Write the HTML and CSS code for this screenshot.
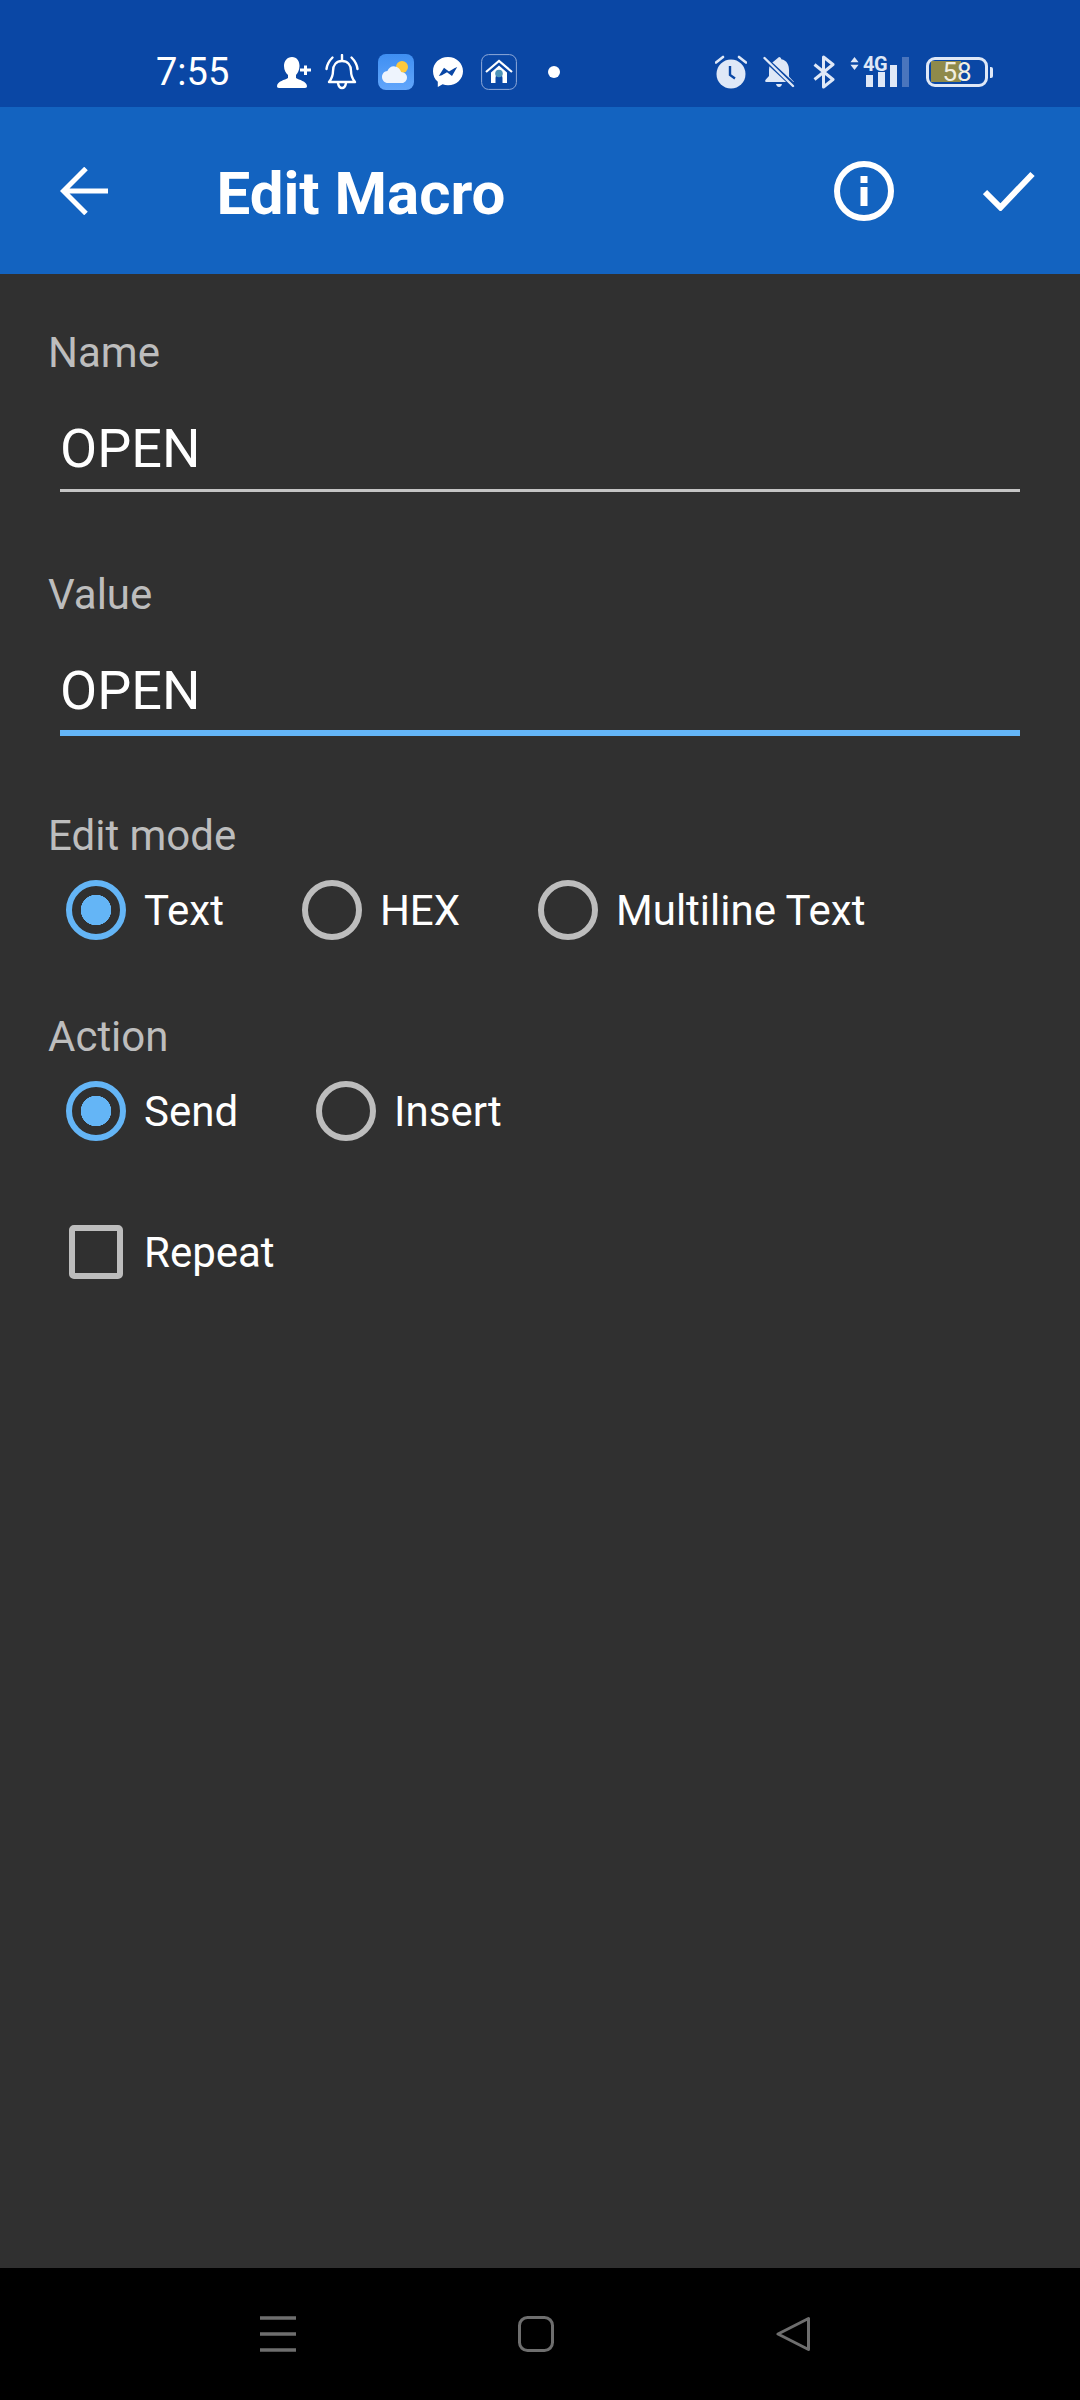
FILE: index.html
```html
<!DOCTYPE html>
<html lang="en">
<head>
<meta charset="utf-8">
<title>Edit Macro</title>
<link rel="stylesheet" href="styles.css">
</head>
<body>
<div class="screen">
  <header class="statusbar">
    <div class="status-left">
      <span class="time">7:55</span>
      <svg class="ic ic-person" viewBox="0 0 34 32"><path fill="#fff" d="M15 0c5 0 7.500 4 7.500 9 0 4-2 7.500-3.500 9v3c3 2 10.500 3 11 8 0 1-.5 2-2 2H2C.5 31 0 30 0 29c.5-5 8-6 11-8v-3C9 16.500 7 13 7 9c0-5 3-9 8-9z"/><path fill="#fff" d="M27 8.500h3v3h4v3h-4V18h-3v-3.500h-4v-3h4z"/></svg>
      <svg class="ic ic-bell" viewBox="0 0 34 36"><g fill="none" stroke="#fff" stroke-width="2.400" stroke-linecap="round" stroke-linejoin="round"><path d="M8 17c0-6 3.500-10 9-10s9 4 9 10c0 5 1.500 8 4 11H4c2.500-3 4-6 4-11z"/><path d="M17 1v5M13 29c.5 3 2 5 4 5s3.500-2 4-5"/><path d="M1.500 15C2 10.500 4 7 7.500 3.500M32.500 15C32 10.500 30 7 26.500 3.500"/></g></svg>
      <svg class="ic ic-weather" viewBox="0 0 36 36"><defs><linearGradient id="sky" x1="0" y1="0" x2="0" y2="1"><stop offset="0" stop-color="#3f8ff2"/><stop offset="1" stop-color="#62a6fb"/></linearGradient></defs><rect width="36" height="36" rx="8" fill="url(#sky)"/><circle cx="24" cy="13" r="6" fill="#ffc93c"/><path fill="#eef4fd" d="M10 29c-3.500 0-6-2.700-6-6 0-3.200 2.400-5.700 5.400-5.900 1.300-3.300 4-5 7.200-4.700 3.300.3 5.700 2.500 6.500 5.500 3.200.1 5.900 2.300 5.900 5.500 0 3-2.300 5.600-5.500 5.600z"/></svg>
      <svg class="ic ic-msgr" viewBox="0 0 32 32"><path fill="#fff" d="M16 1C7.500 1 1 7.200 1 15.200c0 4.300 1.800 8 4.800 10.600V31l4.800-2.700c1.700.6 3.500.9 5.400.9 8.500 0 15-6.200 15-14S24.500 1 16 1z"/><path fill="#0a47a5" d="M6.800 20 12 11.800l5 3.800 5.400-3.400 2.800-1.200L20 20l-5-3.800-5.200 3z"/></svg>
      <svg class="ic ic-home" viewBox="0 0 36 36"><rect x=".6" y=".6" width="34.800" height="34.800" rx="7" fill="none" stroke="#8fa9d8" stroke-width="1"/><path fill="none" stroke="#fff" stroke-width="2.200" d="M5 18 18 7l13 11"/><path fill="#fff" d="M10 18.500 18 11.500l8 7V29h-4.500v-5a3.500 3.500 0 0 0-7 0v5H10z"/><circle cx="18" cy="19.500" r="3.800" fill="#4d93b8"/></svg>
      <span class="dot"></span>
    </div>
    <div class="status-right">
      <svg class="ic ic-alarm" viewBox="0 0 32 34"><circle cx="16" cy="19" r="14.500" fill="#dfe8f7"/><path fill="none" stroke="#dfe8f7" stroke-width="2.600" stroke-linecap="round" d="M1 7.500 8 2M31 7.500 24 2"/><path fill="none" stroke="#0a47a5" stroke-width="2.400" d="M15 11v9l5 3.500"/></svg>
      <svg class="ic ic-belloff" viewBox="0 0 32 34"><path fill="#dfe8f7" d="M16 2c1.400 0 2.300 1 2.300 2.300C24 5.500 26 10 26 15v6.500l5 5.500H3c-.8 0-1.200-1.500-.4-2.300L6 21v-6c0-2 .3-3.800 1-5.400z"/><path fill="#dfe8f7" d="M13 29h6c-.5 2-1.500 3-3 3s-2.500-1-3-3z"/><path stroke="#0a47a5" stroke-width="5" d="M1 3 31 31"/><path stroke="#dfe8f7" stroke-width="2.400" stroke-linecap="round" d="M1.500 3 30 31"/></svg>
      <svg class="ic ic-bt" viewBox="0 0 22 34"><path fill="none" stroke="#dfe8f7" stroke-width="3" stroke-linejoin="round" d="M1.500 9.500 20 24.500 10.500 32V2L20 9.500 1.500 24.500"/></svg>
      <div class="signal">
        <svg class="ic-arrows" viewBox="0 0 10 16"><path fill="#dfe8f7" d="M5 0 10 6.500H0zM5 16 0 9.500h10z"/></svg>
        <span class="net">4G</span>
        <div class="bars">
          <i class="bar b1"></i><i class="bar b2"></i><i class="bar b3"></i><i class="bar b4"></i>
        </div>
      </div>
      <div class="battery-wrap">
        <div class="battery">58</div>
        <i class="nub"></i>
      </div>
    </div>
  </header>

  <div class="toolbar">
    <svg class="tb-back" viewBox="0 0 48 48"><path fill="none" stroke="#fff" stroke-width="5" d="M48 24H3M26 1.500 3.500 24 26 46.500"/></svg>
    <h1 class="title">Edit Macro</h1>
    <svg class="tb-info" viewBox="0 0 60 60"><circle cx="30" cy="30" r="27" fill="none" stroke="#fff" stroke-width="6"/><path fill="#fff" d="M26.500 15h7v7h-7zM26.500 26h7v19h-7z"/></svg>
    <svg class="tb-check" viewBox="0 0 52 40"><path fill="none" stroke="#fff" stroke-width="6" d="M2 21l15.500 15.500L49.500 3"/></svg>
  </div>

  <main class="form">
    <div class="label">Name</div>
    <div class="field">OPEN</div>

    <div class="label label-value">Value</div>
    <div class="field field-focus">OPEN</div>

    <div class="label label-mode">Edit mode</div>
    <div class="radios radios-mode">
      <div class="opt"><span class="radio on"></span><span class="opt-text">Text</span></div>
      <div class="opt"><span class="radio"></span><span class="opt-text">HEX</span></div>
      <div class="opt"><span class="radio"></span><span class="opt-text">Multiline Text</span></div>
    </div>

    <div class="label label-action">Action</div>
    <div class="radios radios-action">
      <div class="opt"><span class="radio on"></span><span class="opt-text">Send</span></div>
      <div class="opt"><span class="radio"></span><span class="opt-text">Insert</span></div>
    </div>

    <div class="check-row">
      <span class="checkbox"></span><span class="opt-text">Repeat</span>
    </div>
  </main>

  <nav class="navbar">
    <svg class="nav-ic" viewBox="0 0 36 36"><path stroke="#6e6e6e" stroke-width="3.600" d="M0 2h36M0 18h36M0 34h36"/></svg>
    <svg class="nav-ic" viewBox="0 0 36 36"><rect x="1.500" y="1.500" width="33" height="33" rx="8" fill="none" stroke="#6e6e6e" stroke-width="3"/></svg>
    <svg class="nav-ic" viewBox="0 0 36 36"><path fill="none" stroke="#6e6e6e" stroke-width="3" stroke-linejoin="round" d="M32.500 2.500v31L2 18z"/></svg>
  </nav>
</div>
</body>
</html>
```
FILE: styles.css
```css
* { box-sizing: border-box; }
html, body { margin: 0; padding: 0; }
body { background: #303030; font-family: Roboto, "Liberation Sans", sans-serif; }
.screen { width: 1080px; height: 2400px; display: flex; flex-direction: column; overflow: hidden; }

.statusbar { height: 107px; flex: none; background: #0a47a5; display: flex; justify-content: space-between; padding: 0 87px 0 156px; align-items: flex-start; }
.status-left, .status-right { display: flex; align-items: center; height: 90px; padding-top: 54px; }
.time { color: #fff; font-size: 38px; line-height: 36px; width: 74px; margin-right: 47px; }
.ic { display: block; flex: none; }
.ic-person { width: 34px; height: 32px; margin-right: 14px; margin-top: 2px; }
.ic-bell { width: 34px; height: 36px; margin-right: 19px; }
.ic-weather { width: 36px; height: 36px; margin-right: 18px; }
.ic-msgr { width: 32px; height: 32px; margin-right: 17px; }
.ic-home { width: 36px; height: 36px; margin-right: 31px; }
.dot { width: 12px; height: 12px; border-radius: 50%; background: #fff; }

.ic-alarm { width: 32px; height: 34px; margin-right: 16px; }
.ic-belloff { width: 32px; height: 34px; margin-right: 18px; }
.ic-bt { width: 22px; height: 34px; margin-right: 14px; }
.signal { position: relative; width: 62px; height: 34px; margin-right: 15px; }
.ic-arrows { position: absolute; left: 1px; top: 2px; width: 9px; height: 13px; }
.net { position: absolute; left: 14px; top: -1px; color: #dfe8f7; font-size: 20px; line-height: 20px; font-weight: 700; letter-spacing: -.5px; }
.bars { position: absolute; left: 17px; right: 2px; bottom: 2px; height: 30px; display: flex; gap: 5px; align-items: flex-end; }
.bar { display: block; width: 7px; background: #dfe8f7; }
.b1 { height: 12px; }
.b2 { height: 15px; }
.b3 { height: 22px; }
.b4 { height: 30px; background: #4a75bd; }
.battery-wrap { display: flex; align-items: center; }
.battery { width: 62px; height: 30px; border: 3px solid #dfe8f7; border-radius: 9px; color: #f2efe0; font-size: 26px; line-height: 24px; text-align: center; background: linear-gradient(#8f8a4a, #8f8a4a) 5px 4px / 30px 21px no-repeat; background-origin: border-box; }
.nub { width: 3px; height: 11px; margin-left: 2px; background: #dfe8f7; border-radius: 0 2px 2px 0; }

.toolbar { height: 167px; flex: none; background: #1363c0; position: relative; display: flex; align-items: center; padding-left: 60px; }
.tb-back { width: 48px; height: 48px; margin-right: 108.500px; flex: none; }
.title { margin: 0; padding-top: 6px; color: #fff; font-size: 60px; font-weight: 700; line-height: 70px; flex: 1; }
.tb-info { width: 60px; height: 60px; margin-right: 89px; flex: none; }
.tb-check { width: 52px; height: 40px; margin-right: 45px; flex: none; }

.form { flex: 1; background: #303030; padding: 54px 60px 0 48px; }
.label { color: #bdbdbd; font-size: 42px; line-height: 50px; }
.field { margin-left: 12px; padding: 36px 0 5px; color: #fff; font-size: 54px; line-height: 70px; border-bottom: 3px solid #c4c4c4; }
.field-focus { padding-bottom: 4px; border-bottom: 6px solid #64b5f6; }
.label-value { margin-top: 78px; }
.label-mode { margin-top: 75px; }
.label-action { margin-top: 72px; }

.radios { display: flex; gap: 78px; padding-left: 18px; }
.radios-mode { margin-top: 19px; }
.radios-action { margin-top: 19px; }
.opt { display: flex; align-items: center; gap: 18px; }
.radio { width: 60px; height: 60px; border-radius: 50%; border: 6px solid #bdbdbd; flex: none; }
.radio.on { border-color: #64b5f6; background: radial-gradient(circle, #64b5f6 0 15px, transparent 15.500px); }
.opt-text { color: #fff; font-size: 42px; line-height: 58px; margin-top: 2px; }
.check-row { display: flex; align-items: center; margin-top: 81px; padding-left: 21px; height: 60px; }
.checkbox { width: 54px; height: 54px; border: 6px solid #bdbdbd; border-radius: 5px; margin-right: 21px; flex: none; }

.navbar { height: 132px; flex: none; background: #000; display: flex; padding: 48px 0 0 260px; }
.nav-ic { width: 36px; height: 36px; margin-right: 222px; flex: none; }
```
